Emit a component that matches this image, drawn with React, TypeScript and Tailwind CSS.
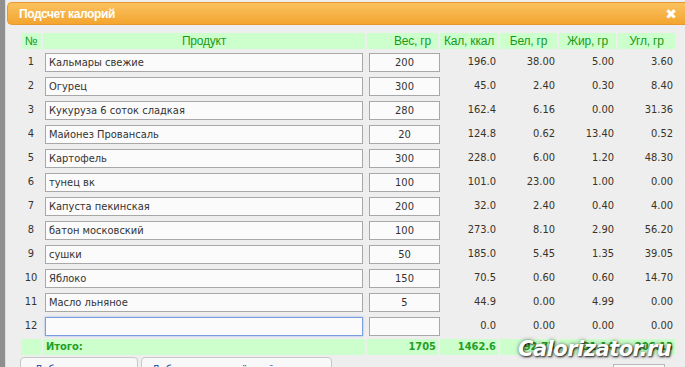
import React from "react";

const rows: [string, string, string, string, string, string, string][] = [
  ["1", "Кальмары свежие", "200", "196.0", "38.00", "5.00", "3.60"],
  ["2", "Огурец", "300", "45.0", "2.40", "0.30", "8.40"],
  ["3", "Кукуруза 6 соток сладкая", "280", "162.4", "6.16", "0.00", "31.36"],
  ["4", "Майонез Провансаль", "20", "124.8", "0.62", "13.40", "0.52"],
  ["5", "Картофель", "300", "228.0", "6.00", "1.20", "48.30"],
  ["6", "тунец вк", "100", "101.0", "23.00", "1.00", "0.00"],
  ["7", "Капуста пекинская", "200", "32.0", "2.40", "0.40", "4.00"],
  ["8", "батон московский", "100", "273.0", "8.10", "2.90", "56.20"],
  ["9", "сушки", "50", "185.0", "5.45", "1.35", "39.05"],
  ["10", "Яблоко", "150", "70.5", "0.60", "0.60", "14.70"],
  ["11", "Масло льняное", "5", "44.9", "0.00", "4.99", "0.00"],
  ["12", "", "", "0.0", "0.00", "0.00", "0.00"],
];

const body = "font-['DejaVu_Sans_Condensed','DejaVu_Sans',sans-serif] text-[11px]";
const narrow = "font-['Liberation_Sans',Arial,sans-serif]";

export default function App() {
  return (
    <div className="w-[685px] h-[367px] overflow-hidden flex bg-[#9a9a9a]">
      <div className="w-[5px] shrink-0 bg-[#8f8f8f]" />
      <div className="flex-1 bg-[#eeeeee] border-l border-[#dcdcdc] pt-[2px] pl-[1px] flex flex-col">
        {/* title bar */}
        <div className="h-[23px] shrink-0 rounded-l-[5px] border border-r-0 border-[#e8982e] bg-gradient-to-b from-[#f9c25e] to-[#f4a52e] flex items-center justify-between pl-[11px] pr-[8px]">
          <span className={`${narrow} text-white font-bold text-[12px] tracking-[-0.4px]`}>Подсчет калорий</span>
          <span className="text-white font-bold text-[14px] leading-none font-['DejaVu_Sans',sans-serif]">✖</span>
        </div>
        {/* table */}
        <div className="relative mt-[8px] ml-[14px] grid grid-cols-[20px_322px_71px_58px_57px_57px_57px] gap-x-[2px] gap-y-[2px] [grid-template-rows:16px_repeat(12,22px)_16px]">
          {["№", "Продукт", "Вес, гр", "Кал, ккал", "Бел, гр", "Жир, гр", "Угл, гр"].map((h, i) => (
            <div
              key={h}
              className={`${narrow} h-[16px] bg-[#ccffcc] text-[#199b19] text-[12px] tracking-[-0.2px] flex items-center justify-center whitespace-nowrap ${i === 2 ? "pl-[20px]" : ""}`}
            >
              {h}
            </div>
          ))}
          {rows.map((r) => (
            <React.Fragment key={r[0]}>
              <div className={`${body} text-[#333] flex items-center justify-center`}>{r[0]}</div>
              <div className="flex items-center pl-[2px]">
                <input
                  readOnly
                  value={r[1]}
                  className={`${body} text-[#333] w-[318px] h-[19px] bg-[#fbfbfb] border ${r[0] === "12" ? "border-[#7a9ee0] shadow-[0_0_2px_#9ab8ee]" : "border-[#a8a8a8]"} px-[3px] outline-none`}
                />
              </div>
              <div className="flex items-center pl-[2px]">
                <input
                  readOnly
                  value={r[2]}
                  className={`${body} text-[#333] w-[71px] h-[19px] bg-[#fbfbfb] border border-[#a8a8a8] text-center outline-none`}
                />
              </div>
              {r.slice(3).map((v, i) => (
                <div key={i} className={`${body} text-[#3a3328] flex items-center justify-end pr-[2px]`}>
                  {v}
                </div>
              ))}
            </React.Fragment>
          ))}
          {/* totals */}
          <div className="h-[16px] bg-[#ccffcc]" />
          <div className={`${body} h-[16px] bg-[#ccffcc] text-[#24a024] font-bold flex items-center pl-[3px]`}>Итого:</div>
          {["1705", "1462.6", "92.73", "31.14", "206.13"].map((v) => (
            <div key={v} className={`${body} h-[16px] bg-[#ccffcc] text-[#24a024] font-bold flex items-center justify-end pr-[2px]`}>
              {v}
            </div>
          ))}
          <div className="absolute left-[497px] top-[301px] text-white font-bold italic text-[21px] font-['DejaVu_Sans',sans-serif] tracking-[-0.5px] [text-shadow:1px_1px_2px_rgba(0,0,0,0.85),0_0_4px_rgba(0,0,0,0.5)] pointer-events-none">
            Calorizator.ru
          </div>
        </div>
        {/* buttons */}
        <div className="mt-[2px] ml-[13px] flex gap-[3px] items-start">
          <div className={`${body} w-[118px] h-[20px] rounded-[4px] border border-[#c8c8c8] bg-[#f8f8f8] text-[#2a55a8] flex justify-center pt-[4px] shrink-0`}>Добавить строку</div>
          <div className={`${body} w-[191px] h-[20px] rounded-[4px] border border-[#c8c8c8] bg-[#f8f8f8] text-[#2a55a8] flex justify-center pt-[4px] shrink-0`}>Добавить сохранённый продукт</div>
          <div className="flex-1" />
          <div className={`${body} w-[52px] h-[20px] mt-[7px] mr-[20px] border border-[#b8b8b8] bg-[#f8f8f8] text-[#333] flex justify-center shrink-0`}>Найти</div>
        </div>
      </div>
    </div>
  );
}
